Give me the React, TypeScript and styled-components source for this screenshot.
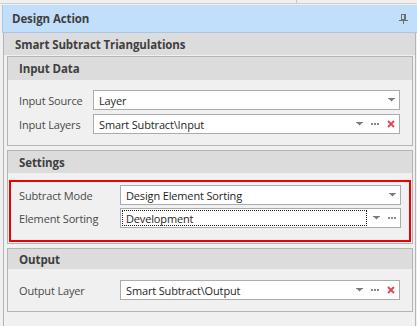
import styled, { createGlobalStyle } from "styled-components"

const GlobalStyle = createGlobalStyle`
  body {
    margin: 0;
    background: #f0f0f0;
    font-family: "Open Sans", "Liberation Sans", sans-serif;
    font-size: 11px;
  }
`

const StyledPage = styled.div`
  width: 417px;
  height: 326px;
  overflow: hidden;
  background: #f0f0f0;
`

const StyledTopStrip = styled.div`
  display: flex;
  height: 3px;
  border-bottom: 1px solid #d0d0d0;
  margin-bottom: 1px;
`

const StyledTopPane = styled.div`
  width: 296px;
  border-right: 1px solid #c6c6c6;
`

const StyledBold = styled.span`
  font-size: 11.5px;
  font-weight: 700;
  letter-spacing: -0.1px;
  color: #3f3f3f;
`

const StyledHeader = styled.div`
  display: flex;
  align-items: center;
  justify-content: space-between;
  height: 27px;
  margin-left: 2px;
  padding: 0 9px 0 9px;
  background: #c1dffa;
  border-bottom: 1px solid #a9c7e2;
  border-left: 1px solid #a9c7e2;
`

const StyledBody = styled.div`
  margin: 0 1px 0 3px;
  height: 300px;
  border-left: 1px solid #b4b4b4;
  border-right: 1px solid #b4b4b4;
`

const StyledTitleBand = styled.div`
  display: flex;
  align-items: center;
  height: 22px;
  padding-left: 11px;
  margin-bottom: 1px;
  background: #dcdcdc;
`

const StyledGroup = styled.div`
  margin: 0 2px 4px 3px;
  border: 1px solid #b4b4b4;
`

const StyledGroupHeader = styled.div<{ $height: number }>`
  display: flex;
  align-items: center;
  height: ${({ $height }) => $height}px;
  padding-left: 11px;
  background: #dcdcdc;
`

const StyledGroupBody = styled.div<{ $pad: string }>`
  display: flex;
  flex-direction: column;
  gap: 4px;
  padding: ${({ $pad }) => $pad};
`

const StyledHighlight = styled.div`
  display: flex;
  flex-direction: column;
  gap: 3px;
  margin: 7px 1px 1px 1px;
  padding: 3px 8px 12px 8px;
  border: 2px solid #ee0000;
`

const StyledRow = styled.div<{ $labelWidth: number }>`
  display: grid;
  grid-template-columns: ${({ $labelWidth }) => $labelWidth}px 1fr;
  align-items: center;
  height: 20px;
  letter-spacing: -0.15px;
`

const StyledLabel = styled.span`
  color: #4a4a4a;
  white-space: nowrap;
`

const StyledEditor = styled.div`
  display: flex;
  align-items: center;
  height: 20px;
  box-sizing: border-box;
  background: #ffffff;
  border: 1px solid #acacac;
  color: #1f1f1f;
`

const StyledValue = styled.span<{ $focused?: boolean }>`
  flex: 1;
  display: flex;
  align-items: center;
  align-self: stretch;
  margin: 1px;
  padding-left: 3px;
  border: 1px dotted ${({ $focused }) => ($focused ? "#222" : "transparent")};
  white-space: nowrap;
`

const StyledButton = styled.span`
  display: flex;
  align-items: center;
  justify-content: center;
  width: 16px;
  height: 18px;
`

const ArrowIcon = () => (
  <svg width="7" height="4" viewBox="0 0 7 4">
    <rect x="0" y="0" width="7" height="1" fill="#7a7a7a" />
    <polygon points="1,1 6,1 3.5,3.6" fill="#7a7a7a" />
  </svg>
)

const DotsIcon = () => (
  <svg width="8" height="2" viewBox="0 0 8 2">
    <rect x="0" y="0" width="2" height="2" fill="#8a8a8a" />
    <rect x="3" y="0" width="2" height="2" fill="#8a8a8a" />
    <rect x="6" y="0" width="2" height="2" fill="#8a8a8a" />
  </svg>
)

const ClearIcon = () => (
  <svg width="8" height="8" viewBox="0 0 8 8">
    <path d="M1 1 L7 7 M7 1 L1 7" stroke="#e8434b" strokeWidth="1.8" />
  </svg>
)

const PinIcon = () => (
  <svg width="9" height="10" viewBox="0 0 9 10">
    <rect x="2" y="0" width="5" height="6" fill="#6e6e6e" />
    <rect x="3" y="1" width="2" height="4" fill="#c1dffa" />
    <rect x="0" y="6" width="9" height="1" fill="#6e6e6e" />
    <rect x="4" y="7" width="1" height="3" fill="#6e6e6e" />
  </svg>
)

interface FieldProps {
  label: string
  value: string
  labelWidth: number
  dots?: boolean
  clear?: boolean
  focused?: boolean
}

const Field = ({ label, value, labelWidth, dots, clear, focused }: FieldProps) => (
  <StyledRow $labelWidth={labelWidth}>
    <StyledLabel>{label}</StyledLabel>
    <StyledEditor>
      <StyledValue $focused={focused}>{value}</StyledValue>
      <StyledButton>
        <ArrowIcon />
      </StyledButton>
      {dots && (
        <StyledButton>
          <DotsIcon />
        </StyledButton>
      )}
      {clear && (
        <StyledButton>
          <ClearIcon />
        </StyledButton>
      )}
    </StyledEditor>
  </StyledRow>
)

export default function App() {
  return (
    <StyledPage>
      <GlobalStyle />
      <StyledTopStrip>
        <StyledTopPane />
      </StyledTopStrip>
      <StyledHeader>
        <StyledBold>Design Action</StyledBold>
        <PinIcon />
      </StyledHeader>
      <StyledBody>
        <StyledTitleBand>
          <StyledBold>Smart Subtract Triangulations</StyledBold>
        </StyledTitleBand>

        <StyledGroup>
          <StyledGroupHeader $height={23}>
            <StyledBold>Input Data</StyledBold>
          </StyledGroupHeader>
          <StyledGroupBody $pad="10px 12px 11px 11px">
            <Field label="Input Source" value="Layer" labelWidth={74} />
            <Field
              label="Input Layers"
              value="Smart Subtract\Input"
              labelWidth={74}
              dots
              clear
            />
          </StyledGroupBody>
        </StyledGroup>

        <StyledGroup>
          <StyledGroupHeader $height={22}>
            <StyledBold>Settings</StyledBold>
          </StyledGroupHeader>
          <StyledHighlight>
            <Field
              label="Subtract Mode"
              value="Design Element Sorting"
              labelWidth={101}
            />
            <Field
              label="Element Sorting"
              value="Development"
              labelWidth={101}
              dots
              focused
            />
          </StyledHighlight>
        </StyledGroup>

        <StyledGroup>
          <StyledGroupHeader $height={20}>
            <StyledBold>Output</StyledBold>
          </StyledGroupHeader>
          <StyledGroupBody $pad="11px 12px 11px 11px">
            <Field
              label="Output Layer"
              value="Smart Subtract\Output"
              labelWidth={101}
              dots
              clear
            />
          </StyledGroupBody>
        </StyledGroup>
      </StyledBody>
    </StyledPage>
  )
}
